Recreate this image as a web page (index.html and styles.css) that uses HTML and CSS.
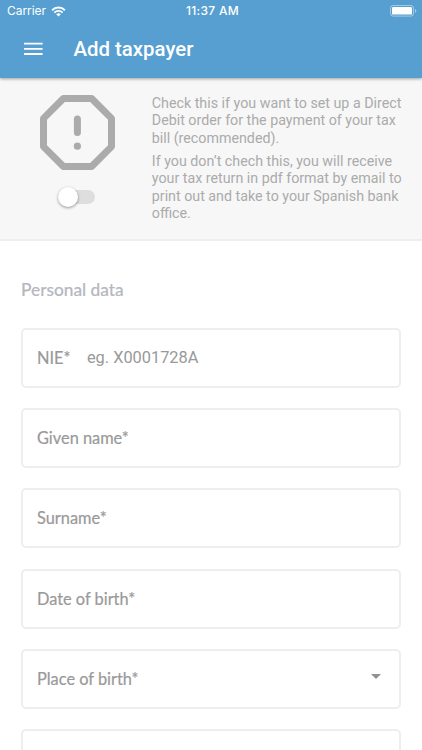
FILE: index.html
```html
<!DOCTYPE html>
<html lang="en">
<head>
<meta charset="utf-8">
<title>Add taxpayer</title>
<meta name="viewport" content="width=device-width, initial-scale=1">
<link rel="stylesheet" href="styles.css">
</head>
<body>
<header class="header">
  <div class="status">
    <div class="carrier">
      <span>Carrier</span>
      <svg class="wifi" width="15" height="11" viewBox="0 0 15 11" fill="none" stroke="#fff" stroke-width="1.9">
        <path d="M1.1 4.2a9.1 9.1 0 0 1 12.8 0"/>
        <path d="M3.4 6.6a5.8 5.8 0 0 1 8.2 0"/>
        <path d="M7.5 10.6 5.2 8.3a3.3 3.3 0 0 1 4.6 0z" fill="#fff" stroke="none"/>
      </svg>
    </div>
    <span class="time">11:37 AM</span>
    <svg class="battery" width="27" height="12" viewBox="0 0 27 12">
      <rect x=".5" y=".5" width="23" height="10.6" rx="2.6" fill="none" stroke="#fff" stroke-opacity=".45"/>
      <rect x="2" y="2" width="20" height="7.6" rx="1.2" fill="#fff"/>
      <path d="M25 3.9c1.8.7 1.8 3.1 0 3.8z" fill="#fff" fill-opacity=".5"/>
    </svg>
  </div>
  <div class="toolbar">
    <svg class="menu" width="19" height="14" viewBox="0 0 19 14" fill="#fff">
      <path d="M0 .7h18.6v1.9H0zM0 5.9h18.6v1.9H0zM0 11.1h18.6V13H0z"/>
    </svg>
    <h1 class="title">Add taxpayer</h1>
  </div>
</header>
<main class="content">
  <section class="debit">
    <div class="debit-side">
      <svg class="alert" width="75" height="75" viewBox="0 0 75 75">
        <path d="M23.4 3.5h28.2l19.9 19.9v28.2L51.6 71.5H23.4L3.5 51.6V23.4z" fill="none" stroke="#ababab" stroke-width="7" stroke-linejoin="round"/>
        <path d="M37.4 24.1v13.5" stroke="#ababab" stroke-width="7" stroke-linecap="round"/>
        <circle cx="37.4" cy="51.2" r="3.6" fill="#ababab"/>
      </svg>
      <div class="toggle"><span class="knob"></span></div>
    </div>
    <div class="debit-text">
      <p>Check this if you want to set up a Direct<br>Debit order for the payment of your tax<br>bill (recommended).</p>
      <p>If you don’t chech this, you will receive<br>your tax return in pdf format by email to<br>print out and take to your Spanish bank<br>office.</p>
    </div>
  </section>
  <form class="form">
    <h2 class="heading">Personal data</h2>
    <div class="field"><span class="label">NIE*</span><span class="hint">eg. X0001728A</span></div>
    <div class="field"><span class="label">Given name*</span></div>
    <div class="field"><span class="label">Surname*</span></div>
    <div class="field"><span class="label">Date of birth*</span></div>
    <div class="field"><span class="label">Place of birth*</span><svg class="caret" width="10" height="5" viewBox="0 0 10 5"><path d="M0 0h10L5 5z" fill="#919191"/></svg></div>
    <div class="field"></div>
  </form>
</main>
</body>
</html>
```
FILE: styles.css
```css
* {
  box-sizing: border-box;
}

body {
  margin: 0;
  background: #fff;
  font-family: Roboto, sans-serif;
}

.header {
  position: relative;
  z-index: 1;
  height: 78px;
  background: #569fd0;
  color: #fff;
  box-shadow: 0 1px 3px rgba(0, 0, 0, .35);
}

.content {
  height: 672px;
  overflow: hidden;
}

.status {
  display: grid;
  grid-template-columns: 1fr auto 1fr;
  align-items: center;
  height: 22px;
  padding: 0 5px 0 7px;
  font: 12px/22px Inter, sans-serif;
}

.carrier {
  display: flex;
  align-items: center;
  gap: 5px;
  letter-spacing: -.05px;
}

.time {
  padding-left: 1px;
  font-weight: 500;
  letter-spacing: .3px;
}

.battery {
  justify-self: end;
}

.toolbar {
  display: flex;
  align-items: center;
  height: 54px;
  padding-left: 23.5px;
  gap: 31px;
}

.title {
  margin: 0;
  font-size: 20.4px;
  font-weight: 500;
  line-height: 24px;
}

.debit {
  display: flex;
  height: 163px;
  padding: 17px 0 0 40.3px;
  background: #f7f7f7;
  border-bottom: 2px solid #eee;
}

.debit-side {
  width: 111.5px;
}

.alert {
  display: block;
}

.toggle {
  width: 33px;
  height: 14px;
  margin: 20px 0 0 22px;
  border-radius: 7px;
  background: #dedede;
}

.knob {
  display: block;
  width: 20px;
  height: 20px;
  border-radius: 50%;
  background: #fff;
  box-shadow: 0 1px 3px rgba(0, 0, 0, .4);
  transform: translate(-4px, -3px);
}

.debit-text {
  color: #ababab;
  font-size: 14.25px;
  line-height: 17.4px;
}

.debit-text p {
  margin: 0 0 5.7px;
  white-space: nowrap;
}

.form {
  padding: 38px 21px 0;
  font-family: Lato, sans-serif;
}

.heading {
  margin: 0 0 28px;
  color: #b7b7c0;
  font-size: 17.3px;
  font-weight: 500;
  line-height: 21px;
  -webkit-text-stroke: .15px #b7b7c0;
}

.field {
  display: flex;
  align-items: center;
  height: 60px;
  margin-bottom: 20.2px;
  padding: 0 18px 1px 14px;
  border: 2px solid #eee;
  border-radius: 5px;
  color: #999;
  font-size: 16.35px;
}

.label {
  -webkit-text-stroke: .2px #999;
}

.hint {
  margin-left: 16.5px;
  font-family: Roboto, sans-serif;
}

.caret {
  margin: -3px 0 0 auto;
}
```
